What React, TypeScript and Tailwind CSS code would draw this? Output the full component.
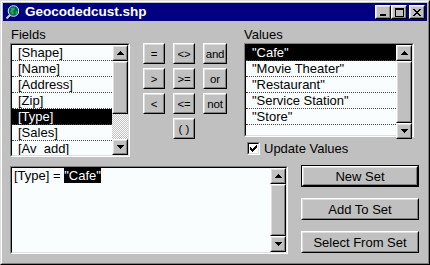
import React from 'react';

const FIELDS = ['[Shape]', '[Name]', '[Address]', '[Zip]', '[Type]', '[Sales]', '[Av_add]'];
const VALUES = ['"Cafe"', '"Movie Theater"', '"Restaurant"', '"Service Station"', '"Store"'];
const OPS = ['=', '<>', 'and', '>', '>=', 'or', '<', '<=', 'not'];

// win95 bevels
const raised =
  'border border-t-white border-l-white border-r-black border-b-black';
const raisedInner =
  'border border-t-[#dfdfdf] border-l-[#dfdfdf] border-r-[#808080] border-b-[#808080] bg-[#c0c0c0]';
const sunkenOuter =
  'border border-t-[#808080] border-l-[#808080] border-r-white border-b-white';
const sunkenInner =
  'border border-t-black border-l-black border-r-[#dfdfdf] border-b-[#dfdfdf]';

const Arrow = ({ down }: { down?: boolean }) => (
  <svg width="7" height="4" viewBox="0 0 7 4" shapeRendering="crispEdges" className={down ? 'rotate-180' : ''}>
    <path d="M3 0h1v1h-1z M2 1h3v1h-3z M1 2h5v1h-5z M0 3h7v1h-7z" fill="#000" />
  </svg>
);

const Bevel = ({ className = '', children }: { className?: string; children?: React.ReactNode }) => (
  <div className={`${raised} ${className}`}>
    <div className={`${raisedInner} w-full h-full flex items-center justify-center`}>{children}</div>
  </div>
);

const ScrollBar = () => (
  <div className="w-[16px] h-full flex flex-col shrink-0">
    <Bevel className="h-[16px] w-[16px] shrink-0">
      <Arrow />
    </Bevel>
    <Bevel className="w-[16px] flex-1" />
    <Bevel className="h-[16px] w-[16px] shrink-0">
      <Arrow down />
    </Bevel>
  </div>
);

const ThumbBar = ({ thumb }: { thumb: number }) => (
  <div className="w-[16px] h-full flex flex-col shrink-0">
    <Bevel className="h-[16px] w-[16px] shrink-0">
      <Arrow />
    </Bevel>
    <div className="flex-1 flex flex-col bg-[image:repeating-conic-gradient(#fff_0_25%,#c0c0c0_0_50%)] bg-[length:2px_2px]">
      <div style={{ height: thumb }}>
        <Bevel className="w-full h-full" />
      </div>
    </div>
    <Bevel className="h-[16px] w-[16px] shrink-0">
      <Arrow down />
    </Bevel>
  </div>
);

const ListBox = ({ items, selected, thumb, className }: { items: string[]; selected: number; thumb: number; className: string }) => (
  <div className={`${sunkenOuter} ${className}`}>
    <div className={`${sunkenInner} h-full flex bg-[#fafdfd]`}>
      <div className="flex-1 overflow-hidden">
        {items.map((it, i) => (
          <div
            key={it}
            className={`h-[16px] leading-[15px] pl-[6px] whitespace-nowrap border-b border-dotted border-[#444] ${
              i === selected ? 'bg-black text-white' : ''
            }`}
          >
            {it}
          </div>
        ))}
      </div>
      <ThumbBar thumb={thumb} />
    </div>
  </div>
);

const TitleBar = () => (
  <div className="h-[18px] bg-[#000080] flex items-center shrink-0">
    <svg width="14" height="15" viewBox="0 0 14 15" className="ml-[2px]">
      <line x1="1.5" y1="13.5" x2="5" y2="10" stroke="#c8c8c8" strokeWidth="2.2" />
      <circle cx="8.5" cy="6" r="5.3" fill="#006060" stroke="#e8e8e8" strokeWidth="1" />
      <path d="M6 3 L9 2.5 L10 4.5 L8 6 L9 8.5 L7 9.5 L5.5 7 Z" fill="#20b040" />
      <path d="M10.5 6.5 L12.5 6 L12 9 L10.5 9.5 Z" fill="#20b040" />
    </svg>
    <span className="ml-[6px] text-white font-bold text-[13.5px] leading-[16px]">Geocodedcust.shp</span>
    <div className="ml-auto mr-[2px] flex items-center">
      <Bevel className="w-[16px] h-[14px]">
        <svg width="8" height="7" viewBox="0 0 8 7" shapeRendering="crispEdges">
          <rect x="1" y="5" width="6" height="2" fill="#000" />
        </svg>
      </Bevel>
      <Bevel className="w-[16px] h-[14px]">
        <svg width="9" height="9" viewBox="0 0 9 9" shapeRendering="crispEdges">
          <path d="M0 0h9v9h-9z M1 2v6h7v-6z" fill="#000" fillRule="evenodd" />
        </svg>
      </Bevel>
      <Bevel className="w-[16px] h-[14px] ml-[2px]">
        <svg width="8" height="7" viewBox="0 0 8 7" shapeRendering="crispEdges">
          <path d="M0 0h2v1h-2z M6 0h2v1h-2z M1 1h2v1h-2z M5 1h2v1h-2z M2 2h4v1h-4z M3 3h2v1h-2z M2 4h4v1h-4z M1 5h2v1h-2z M5 5h2v1h-2z M0 6h2v1h-2z M6 6h2v1h-2z" fill="#000" />
        </svg>
      </Bevel>
    </div>
  </div>
);

const Button = ({ label, def }: { label: string; def?: boolean }) =>
  def ? (
    <div className="border border-black h-[22px]">
      <Bevel className="w-full h-full">
        <span className="text-[13px] leading-[15px]">{label}</span>
      </Bevel>
    </div>
  ) : (
    <Bevel className="h-[22px]">
      <span className="text-[13px] leading-[15px]">{label}</span>
    </Bevel>
  );

export default function App() {
  return (
    <div className="w-[430px] h-[265px] border border-t-[#dfdfdf] border-l-[#dfdfdf] border-r-black border-b-black font-['Liberation_Sans',Arial,sans-serif] text-black text-[13px]">
      <div className="h-full border border-t-white border-l-white border-r-[#808080] border-b-[#808080] bg-[#c0c0c0] p-px flex flex-col">
        <TitleBar />

        <div className="flex items-start pl-[7px] pt-[4px]">
          <div className="w-[120px]">
            <div className="h-[18px] pt-[2px] leading-[15px] pl-px">Fields</div>
            <ListBox items={FIELDS} selected={4} thumb={53} className="h-[114px]" />
          </div>

          <div className="ml-[13px] mt-[18px] grid grid-cols-[22px_22px_24px] gap-x-[8px] gap-y-[4px]">
            {OPS.map((o) => (
              <Bevel key={o} className="h-[21px]">
                <span className="text-[11.5px] leading-[14px] tracking-[-0.2px]">{o}</span>
              </Bevel>
            ))}
            <Bevel className="h-[21px] col-start-2">
              <span className="text-[11.5px] leading-[14px]">( )</span>
            </Bevel>
          </div>

          <div className="ml-[17px] w-[170px]">
            <div className="h-[18px] pt-[2px] leading-[15px]">Values</div>
            <ListBox items={[...VALUES, '']} selected={0} thumb={62} className="h-[94px]" />
            <div className="mt-[4px] ml-[3px] flex items-center h-[14px]">
              <div className={`${sunkenOuter} w-[13px] h-[13px]`}>
                <div className={`${sunkenInner} w-full h-full bg-white flex items-center justify-center`}>
                  <svg width="7" height="7" viewBox="0 0 7 7" shapeRendering="crispEdges">
                    <path d="M6 0h1v3h-1z M5 1h1v3h-1z M4 2h1v3h-1z M3 3h1v3h-1z M2 4h1v3h-1z M1 3h1v3h-1z M0 2h1v3h-1z" fill="#000" />
                  </svg>
                </div>
              </div>
              <span className="ml-[4px] leading-[15px]">Update Values</span>
            </div>
          </div>
        </div>

        <div className="flex items-start pl-[7px] mt-[8px]">
          <div className={`${sunkenOuter} w-[278px] h-[88px] mt-px`}>
            <div className={`${sunkenInner} h-full flex bg-[#fafdfd]`}>
              <div className="flex-1 pl-[2px] leading-[15px] whitespace-nowrap">
                [Type] = <span className="bg-black text-white">"Cafe"</span>
              </div>
              <ScrollBar />
            </div>
          </div>
          <div className="ml-[13px] w-[118px] flex flex-col gap-[11px]">
            <Button label="New Set" def />
            <Button label="Add To Set" />
            <Button label="Select From Set" />
          </div>
        </div>
      </div>
    </div>
  );
}
